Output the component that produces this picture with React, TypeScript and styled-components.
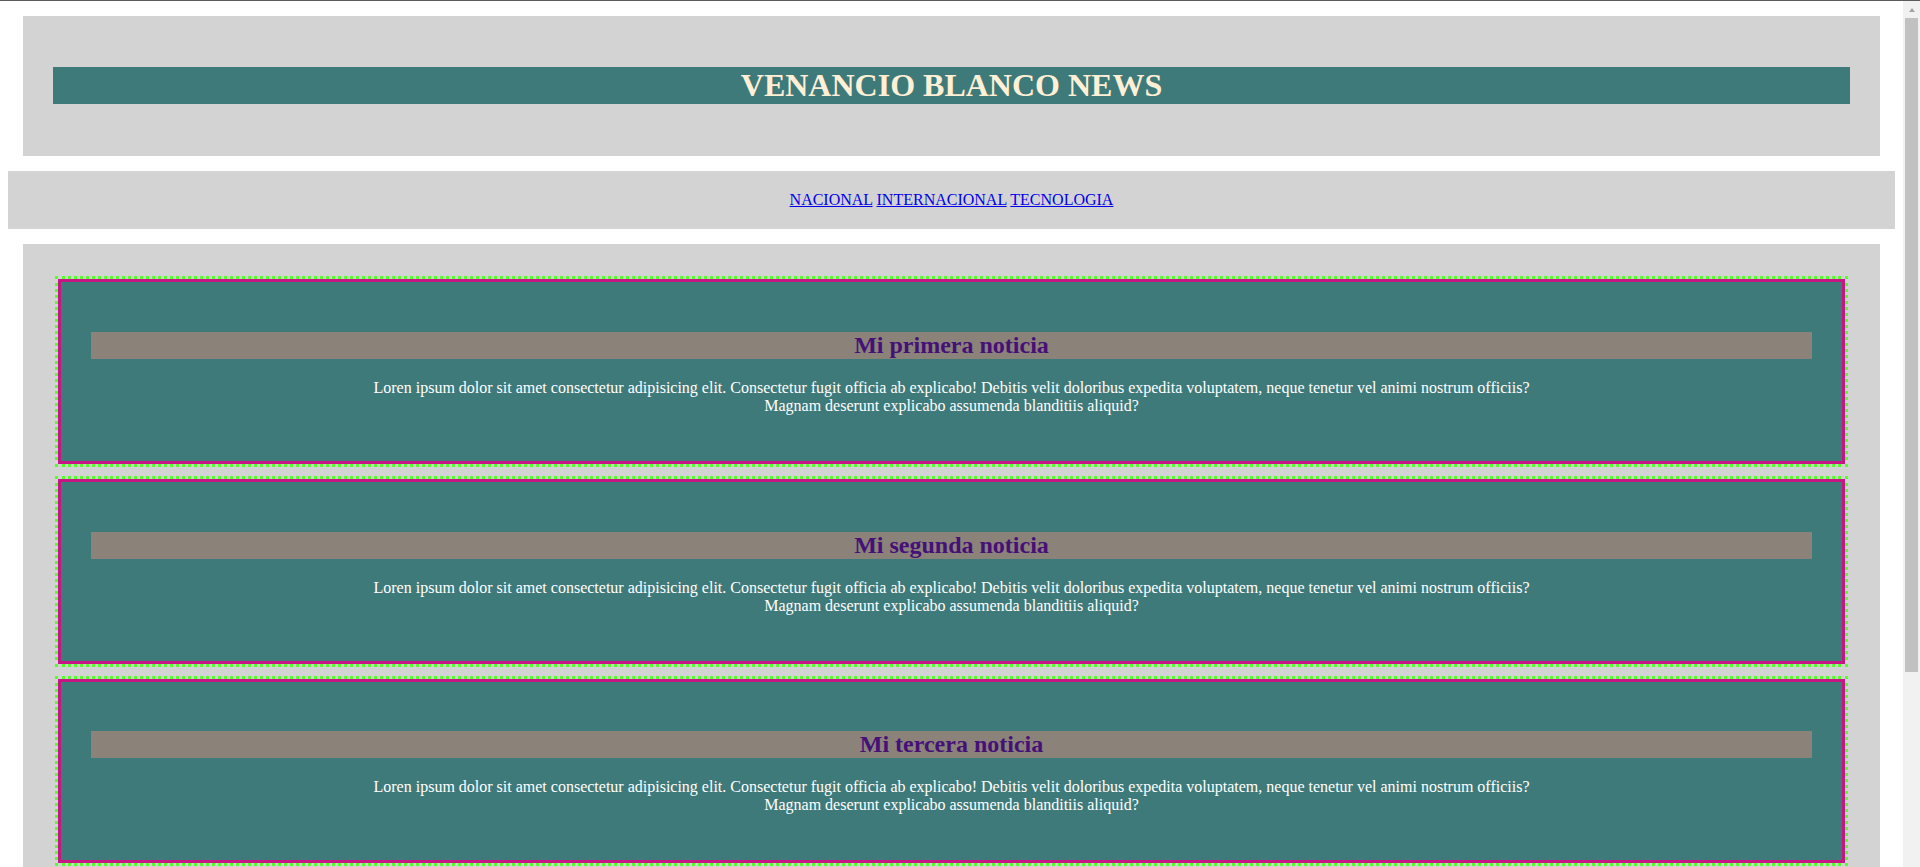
import styled, {createGlobalStyle} from "styled-components";

const GlobalStyle = createGlobalStyle`
  html {
    border-top: 1px solid #5b5b5b;
  }
  body {
    margin: 0 25px 8px 8px;
    font-family: "Liberation Serif", "Times New Roman", serif;
    font-size: 16px;
    background: #fff;
  }
`

const teal = '#3f7a7a'

const Header = styled.header`
  margin: 15px;
  padding: 30px;
  background: #d3d3d3;
`

const SiteTitle = styled.h1`
  margin: 0.67em 0;
  font-size: 32px;
  font-weight: 700;
  text-align: center;
  color: #ffefd5;
  background: ${teal};
`

const Nav = styled.nav`
  margin: 15px 0;
  padding: 20px;
  text-align: center;
  background: #d3d3d3;
`

const NavLink = styled.a`
  color: #0000ee;
  text-decoration: underline;
`

const Main = styled.main`
  margin: 15px;
  padding: 20px;
  background: #d3d3d3;
`

const Article = styled.article`
  margin: 15px;
  padding: 30px;
  text-align: center;
  background: ${teal};
  border: 3px solid #c71585;
  outline: 3px dotted #55ff2a;
`

const NewsTitle = styled.h2`
  margin: 0.83em 0;
  font-size: 24px;
  font-weight: 700;
  color: #451078;
  background: #8b8279;
`

const NewsText = styled.p`
  margin: 16px 0;
  color: #fff;
`

// la barra de scroll del navegador, tal como sale en la captura
const ScrollTrack = styled.div`
  position: fixed;
  top: 1px;
  right: 0;
  bottom: 0;
  width: 17px;
  background: #f1f1f1;
`

const ScrollArrow = styled.div`
  position: absolute;
  top: 7px;
  left: 6px;
  width: 0;
  height: 0;
  border-left: 3px solid transparent;
  border-right: 3px solid transparent;
  border-bottom: 4px solid #a3a3a3;
`

const ScrollThumb = styled.div`
  position: absolute;
  top: 17px;
  left: 2px;
  width: 13px;
  height: 654px;
  background: #c1c1c1;
`

const noticias = [
    'Mi primera noticia',
    'Mi segunda noticia',
    'Mi tercera noticia',
    'Mi cuarta noticia',
]

export default function App() {
    return (
        <>
            <GlobalStyle/>
            <Header>
                <SiteTitle>VENANCIO BLANCO NEWS</SiteTitle>
            </Header>
            <Nav>
                <NavLink href="#">NACIONAL</NavLink> <NavLink href="#">INTERNACIONAL</NavLink> <NavLink
                href="#">TECNOLOGIA</NavLink>
            </Nav>
            <Main>
                {noticias.map(titulo => (
                    <Article key={titulo}>
                        <NewsTitle>{titulo}</NewsTitle>
                        <NewsText>
                            Loren ipsum dolor sit amet consectetur adipisicing elit. Consectetur fugit officia ab
                            explicabo! Debitis velit doloribus expedita voluptatem, neque tenetur vel animi nostrum
                            officiis?<br/>
                            Magnam deserunt explicabo assumenda blanditiis aliquid?
                        </NewsText>
                    </Article>
                ))}
            </Main>
            <ScrollTrack>
                <ScrollArrow/>
                <ScrollThumb/>
            </ScrollTrack>
        </>
    )
}
